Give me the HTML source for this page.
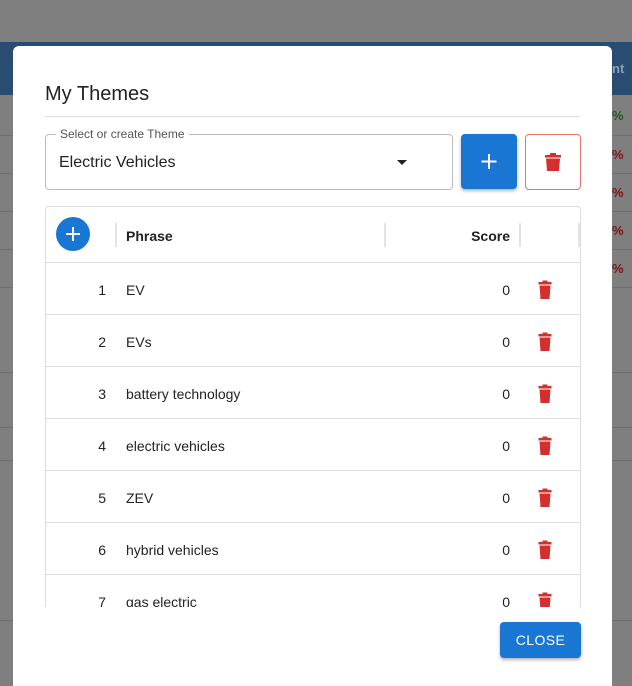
<!DOCTYPE html>
<html><head><style>
html,body{margin:0;width:632px;height:686px;overflow:hidden}
body{background:#7f7f7f;font-family:"Liberation Sans",Arial,sans-serif;position:relative}
.bar{position:absolute;left:0;top:42px;width:632px;height:53px;background:#284c72}
.hl{position:absolute;left:0;width:632px;height:1px;background:#6e6e6e}
.pct{position:absolute;left:612px;font-size:13px;font-weight:bold}
.dlg{position:absolute;left:13px;top:46px;width:599px;height:660px;background:#fff;border-radius:6px}
h2{position:absolute;left:32px;top:37px;margin:0;font-weight:normal;font-size:20px;color:#222}
.sep{position:absolute;left:32px;top:70px;width:535px;height:1px;background:#ddd}
.sel{position:absolute;left:32px;top:88px;width:406px;height:54px;border:1px solid #bbb;border-radius:4px}
.lbl{position:absolute;left:10px;top:-8px;background:#fff;padding:0 4px;font-size:12px;color:#555}
.val{position:absolute;left:13px;top:19px;font-size:16px;color:#222}
.tri{position:absolute;left:351px;top:25px;border-left:5px solid transparent;border-right:5px solid transparent;border-top:5px solid #222}
.add{position:absolute;left:448px;top:88px;width:56px;height:55px;background:#1976d2;border-radius:4px;box-shadow:0 2px 3px rgba(0,0,0,.3)}
.del{position:absolute;left:512px;top:88px;width:54px;height:54px;border:1px solid #e57373;border-radius:4px}
.tbl{position:absolute;left:32px;top:160px;width:534px;height:400px;border:1px solid #ddd;border-bottom:none;border-radius:4px 4px 0 0;overflow:hidden}
.hdr{height:55px;border-bottom:1px solid #ddd;position:relative;font-size:14px;font-weight:bold;color:#222}
.row{height:51px;border-bottom:1px solid #ddd;position:relative;font-size:14px;color:#222}
.n{position:absolute;left:40px;width:20px;text-align:right;top:19px}
.p{position:absolute;left:80px;top:19px}
.s{position:absolute;right:70px;top:19px}
.t{position:absolute;left:491px;top:17px}
.vl{position:absolute;top:16px;width:2px;height:24px;background:#e4e4e4}
.close{position:absolute;left:487px;top:576px;width:81px;height:36px;background:#1976d2;color:#fff;font-size:14px;text-align:center;line-height:36px;border-radius:4px;box-shadow:0 2px 3px rgba(0,0,0,.3);letter-spacing:.4px}
</style></head><body>
<div class="bar"></div>
<div class="hl" style="top:135px"></div><div class="hl" style="top:173px"></div><div class="hl" style="top:211px"></div><div class="hl" style="top:249px"></div><div class="hl" style="top:287px"></div><div class="hl" style="top:372px"></div><div class="hl" style="top:427px"></div><div class="hl" style="top:460px"></div><div class="hl" style="top:620px"></div>
<div class="pct" style="top:108px;color:#1f5a1f">%</div>
<div class="pct" style="top:147px;color:#7a1414">%</div>
<div class="pct" style="top:185px;color:#7a1414">%</div>
<div class="pct" style="top:223px;color:#7a1414">%</div>
<div class="pct" style="top:261px;color:#7a1414">%</div>
<div class="pct" style="top:61px;left:612px;color:#8aa0b8">nt</div>
<div class="dlg">
<h2>My Themes</h2><div class="sep"></div>
<div class="sel"><div class="lbl">Select or create Theme</div><div class="val">Electric Vehicles</div><div class="tri"></div></div>
<div class="add"><svg width="56" height="55"><path d="M28 20v15M20.5 27.5h15" stroke="#fff" stroke-width="2"/></svg></div>
<div class="del"><svg width="54" height="54"><path d="M19 20h16v2.5H19zM24 18h6v2.5h-6zM20 23.5h14l-1 12.5h-12z" fill="#d32f2f"/></svg></div>
<div class="tbl">
<div class="hdr"><svg style="position:absolute;left:10px;top:10px" width="34" height="34"><circle cx="17" cy="17" r="17" fill="#1976d2"/><path d="M17 10v14M10 17h14" stroke="#fff" stroke-width="2"/></svg>
<div class="vl" style="left:69px"></div><div style="position:absolute;left:80px;top:21px">Phrase</div>
<div class="vl" style="left:338px"></div><div style="position:absolute;right:70px;top:21px">Score</div>
<div class="vl" style="left:473px"></div><div class="vl" style="left:532px"></div></div>
<div class="row"><div class="n">1</div><div class="p">EV</div><div class="s">0</div><svg class="t" width="16" height="20"><path d="M1.5 2h13v2.5h-13zM5.5 0.5h5v2h-5zM2.5 5.5h11l-1 13.5h-9z" fill="#d32f2f"/></svg></div>
<div class="row"><div class="n">2</div><div class="p">EVs</div><div class="s">0</div><svg class="t" width="16" height="20"><path d="M1.5 2h13v2.5h-13zM5.5 0.5h5v2h-5zM2.5 5.5h11l-1 13.5h-9z" fill="#d32f2f"/></svg></div>
<div class="row"><div class="n">3</div><div class="p">battery technology</div><div class="s">0</div><svg class="t" width="16" height="20"><path d="M1.5 2h13v2.5h-13zM5.5 0.5h5v2h-5zM2.5 5.5h11l-1 13.5h-9z" fill="#d32f2f"/></svg></div>
<div class="row"><div class="n">4</div><div class="p">electric vehicles</div><div class="s">0</div><svg class="t" width="16" height="20"><path d="M1.5 2h13v2.5h-13zM5.5 0.5h5v2h-5zM2.5 5.5h11l-1 13.5h-9z" fill="#d32f2f"/></svg></div>
<div class="row"><div class="n">5</div><div class="p">ZEV</div><div class="s">0</div><svg class="t" width="16" height="20"><path d="M1.5 2h13v2.5h-13zM5.5 0.5h5v2h-5zM2.5 5.5h11l-1 13.5h-9z" fill="#d32f2f"/></svg></div>
<div class="row"><div class="n">6</div><div class="p">hybrid vehicles</div><div class="s">0</div><svg class="t" width="16" height="20"><path d="M1.5 2h13v2.5h-13zM5.5 0.5h5v2h-5zM2.5 5.5h11l-1 13.5h-9z" fill="#d32f2f"/></svg></div>
<div class="row"><div class="n">7</div><div class="p">gas electric</div><div class="s">0</div><svg class="t" width="16" height="20"><path d="M1.5 2h13v2.5h-13zM5.5 0.5h5v2h-5zM2.5 5.5h11l-1 13.5h-9z" fill="#d32f2f"/></svg></div>
</div>
<div class="close">CLOSE</div>
</div>
</body></html>
